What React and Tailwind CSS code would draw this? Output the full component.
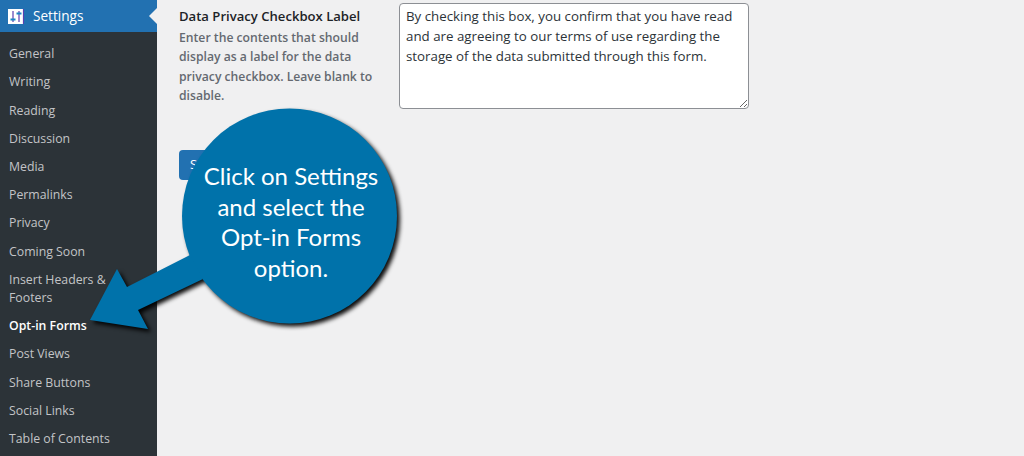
import React from 'react';

const menuItems = [
  'General', 'Writing', 'Reading', 'Discussion', 'Media', 'Permalinks', 'Privacy', 'Coming Soon',
  'Insert Headers & Footers', 'Opt-in Forms', 'Post Views', 'Share Buttons', 'Social Links', 'Table of Contents',
];

const privacyText = 'By checking this box, you confirm that you have read and are agreeing to our terms of use regarding the storage of the data submitted through this form.';

function Sidebar() {
  return (
    <aside className="w-[157px] shrink-0 bg-[#2c3338]">
      <div className="relative flex h-8 items-center bg-[#2271b1] text-white">
        <svg viewBox="0 0 16 15" className="ml-2 h-[15px] w-4">
          <rect width="16" height="15" fill="#fff" />
          <path d="M5 2v11M11 2v11M15.5 0v15" stroke="#5b3fb0" strokeWidth="1.2" />
          <path d="M2.5 9.5h5v2h-5zM8.5 3.5h5v2h-5z" fill="#1b86c4" />
        </svg>
        <span className="ml-[9px] text-[13.6px]">Settings</span>
        <div className="absolute right-0 top-2 border-y-8 border-r-8 border-y-transparent border-r-[#f0f0f1]" />
      </div>
      <ul className="pt-[8.1px] text-[12.3px] leading-[18.2px] text-[#c3c4c7]">
        {menuItems.map((item) => (
          <li key={item} className={`py-[5px] pl-[9px] pr-2 ${item === 'Opt-in Forms' ? 'font-semibold text-white' : ''}`}>
            {item}
          </li>
        ))}
      </ul>
    </aside>
  );
}

function Callout() {
  return (
    <div className="absolute left-0 top-0 h-[456px] w-[420px]">
      <svg viewBox="0 0 420 456" className="absolute inset-0 h-full w-full drop-shadow-[3px_3px_2px_rgba(0,0,0,0.95)]">
        <circle cx="289.5" cy="216" r="107.5" fill="#0072aa" />
        <path d="M90 320 L117 269 L127 287 L190 255 L203 279 L138 310 L148 329 Z" fill="#0072aa" />
      </svg>
      <p className="absolute left-[182px] top-[161px] w-[218px] text-center text-[24px] leading-[30.5px] text-white [font-family:'Lato',sans-serif]">
        Click on Settings<br />and select the<br />Opt-in Forms<br />option.
      </p>
    </div>
  );
}

export default function App() {
  return (
    <div className="relative flex h-[456px] overflow-hidden bg-[#f0f0f1] [font-family:'Open_Sans','Noto_Sans',sans-serif]">
      <Sidebar />
      <main className="pl-[22px] pt-[3px]">
        <div className="flex">
          <div className="w-[220px] pt-[4px] text-[12.2px] leading-[19.5px] font-semibold text-[#646970]">
            <h2 className="text-[13.1px] text-[#1d2327]">Data Privacy Checkbox Label</h2>
            <p className="mt-[1px] w-[200px]">Enter the contents that should display as a label for the data privacy checkbox. Leave blank to disable.</p>
          </div>
          <textarea
            readOnly
            defaultValue={privacyText}
            className="h-[106px] w-[350px] rounded border border-[#8c8f94] bg-white px-[6px] py-[2px] text-[13.3px] leading-5 text-[#2c3338]"
          />
        </div>
        <button className="mt-[41px] h-[30px] rounded bg-[#2271b1] px-[11px] text-[13px] text-white">Save Changes</button>
      </main>
      <Callout />
    </div>
  );
}
